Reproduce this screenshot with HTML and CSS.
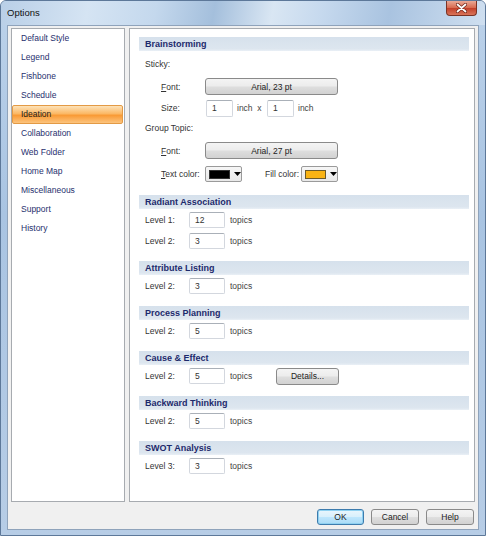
FILE: index.html
```html
<!DOCTYPE html>
<html>
<head>
<meta charset="utf-8">
<title>Options</title>
<link rel="stylesheet" href="styles.css">
</head>
<body>
<div class="window">
  <div class="titlebar">
    <span class="title">Options</span>
    <div class="close">
      <svg width="11" height="10" viewBox="0 0 11 10">
        <path d="M1.5 1.5 L9.5 8.5 M9.5 1.5 L1.5 8.5" stroke="#6b2418" stroke-width="3.2" stroke-linecap="round"/>
        <path d="M1.5 1.5 L9.5 8.5 M9.5 1.5 L1.5 8.5" stroke="#ffffff" stroke-width="1.8" stroke-linecap="round"/>
      </svg>
    </div>
  </div>
  <div class="client">
    <div class="panes">
      <ul class="nav">
        <li class="item">Default Style</li>
        <li class="item">Legend</li>
        <li class="item">Fishbone</li>
        <li class="item">Schedule</li>
        <li class="item active">Ideation</li>
        <li class="item">Collaboration</li>
        <li class="item">Web Folder</li>
        <li class="item">Home Map</li>
        <li class="item">Miscellaneous</li>
        <li class="item">Support</li>
        <li class="item">History</li>
      </ul>
      <div class="content">
        <section class="sec sec-brain">
          <h2 class="band">Brainstorming</h2>
          <div class="row h-sticky">Sticky:</div>
          <div class="row sub h-font"><span class="lbl"><u>F</u>ont:</span><span class="btn fontbtn">Arial, 23 pt</span></div>
          <div class="row sub h-size"><span class="lbl">Size:</span><span class="field small">1</span><span class="unit">inch&nbsp; x</span><span class="field small">1</span><span class="unit">inch</span></div>
          <div class="row h-group">Group Topic:</div>
          <div class="row sub h-font2"><span class="lbl"><u>F</u>ont:</span><span class="btn fontbtn">Arial, 27 pt</span></div>
          <div class="row sub h-color">
            <span class="lbl"><u>T</u>ext color:</span>
            <span class="picker"><span class="swatch black"></span><svg class="arrow" width="7" height="4" viewBox="0 0 7 4"><path d="M0 0H7L3.5 4Z" fill="#000"/></svg></span>
            <span class="lbl fill">Fill color:</span>
            <span class="picker"><span class="swatch orange"></span><svg class="arrow" width="7" height="4" viewBox="0 0 7 4"><path d="M0 0H7L3.5 4Z" fill="#000"/></svg></span>
          </div>
        </section>
        <section class="sec">
          <h2 class="band">Radiant Association</h2>
          <div class="row lvl"><span class="lbl2">Level 1:</span><span class="field">12</span><span class="unit">topics</span></div>
          <div class="row lvl"><span class="lbl2">Level 2:</span><span class="field">3</span><span class="unit">topics</span></div>
        </section>
        <section class="sec">
          <h2 class="band">Attribute Listing</h2>
          <div class="row lvl"><span class="lbl2">Level 2:</span><span class="field">3</span><span class="unit">topics</span></div>
        </section>
        <section class="sec">
          <h2 class="band">Process Planning</h2>
          <div class="row lvl"><span class="lbl2">Level 2:</span><span class="field">5</span><span class="unit">topics</span></div>
        </section>
        <section class="sec">
          <h2 class="band">Cause &amp; Effect</h2>
          <div class="row lvl"><span class="lbl2">Level 2:</span><span class="field">5</span><span class="unit wide">topics</span><span class="btn details">Details...</span></div>
        </section>
        <section class="sec">
          <h2 class="band">Backward Thinking</h2>
          <div class="row lvl"><span class="lbl2">Level 2:</span><span class="field">5</span><span class="unit">topics</span></div>
        </section>
        <section class="sec">
          <h2 class="band">SWOT Analysis</h2>
          <div class="row lvl"><span class="lbl2">Level 3:</span><span class="field">3</span><span class="unit">topics</span></div>
        </section>
      </div>
    </div>
    <div class="footer">
      <span class="btn dlg ok">OK</span>
      <span class="btn dlg">Cancel</span>
      <span class="btn dlg">Help</span>
    </div>
  </div>
</div>
</body>
</html>
```
FILE: styles.css
```css
html, body {
  margin: 0;
  padding: 0;
}
body {
  width: 486px;
  height: 536px;
  overflow: hidden;
  font-family: "Liberation Sans", Arial, sans-serif;
  font-size: 8.5px;
  color: #333;
}
.window {
  width: 486px;
  height: 536px;
  box-sizing: border-box;
  display: flex;
  flex-direction: column;
  border: 1px solid #5d7899;
  border-radius: 6px 6px 0 0;
  background: linear-gradient(180deg, #bcd2ea 0%, #a9c4e2 40%, #b7cde6 100%);
}
.titlebar {
  height: 24px;
  flex: none;
  display: flex;
  justify-content: space-between;
  align-items: flex-start;
  border-radius: 5px 5px 0 0;
  background: linear-gradient(100deg, #b9cfe7 0%, #d5e4f3 18%, #c4d8ed 32%, #a4bfdc 44%, #d9e6f3 56%, #c6d9ee 66%, #a9c3e0 80%, #cfdff0 100%);
}
.title {
  padding: 6px 0 0 6px;
  font-size: 9.5px;
  color: #111;
}
.close {
  width: 31px;
  height: 15px;
  margin-right: 8px;
  box-sizing: border-box;
  border: 1px solid #7b3325;
  border-top: none;
  border-radius: 0 0 4px 4px;
  background: linear-gradient(180deg, #e9a996 0%, #d86a50 48%, #c2402a 52%, #d9755a 100%);
  display: flex;
  align-items: center;
  justify-content: center;
}
.client {
  flex: 1;
  margin: 0 6px 5px 6px;
  border: 1px solid #8fa3bb;
  background: #f0f0f0;
  display: flex;
  flex-direction: column;
  padding: 2px 3px 4px 3px;
}
.panes {
  flex: 1;
  display: flex;
  gap: 4px;
  min-height: 0;
}
.nav {
  width: 114px;
  box-sizing: border-box;
  margin: 0;
  padding: 0;
  list-style: none;
  background: #fff;
  border: 1px solid #a7abb0;
}
.item {
  height: 19px;
  line-height: 19px;
  padding-left: 9px;
  margin-right: 1px;
  color: #27306e;
  box-sizing: border-box;
}
.item.active {
  color: #1c1c1c;
  border: 1px solid #e39a45;
  border-radius: 2px;
  line-height: 17px;
  padding-left: 8px;
  background: linear-gradient(180deg, #fde2b8 0%, #fbb865 45%, #f99a35 55%, #fcc47e 100%);
}
.content {
  flex: 1;
  background: #fff;
  border: 1px solid #a7abb0;
  padding: 8px 5px 0 9px;
}
.sec {
  margin-bottom: 10px;
}
.sec-brain {
  margin-bottom: 11px;
}
.band {
  margin: 0;
  height: 14px;
  line-height: 14px;
  padding-left: 6px;
  font-size: 9px;
  font-weight: bold;
  color: #1d2a6c;
  background: linear-gradient(180deg, #d6e1ec 0%, #dde6ef 85%, #eaf0f6 100%);
}
.row {
  display: flex;
  align-items: center;
  padding-left: 6px;
}
.row.sub {
  padding-left: 22px;
}
.h-sticky { height: 24px; margin-top: 1px; }
.h-font { height: 21px; }
.h-size { height: 22px; }
.h-group { height: 18px; }
.h-font2 { height: 27px; }
.h-color { height: 20px; }
.lvl {
  height: 20px;
  margin-top: 1px;
}
.lbl {
  width: 44px;
  flex: none;
}
.lbl.fill {
  width: 36px;
  margin-left: 23px;
}
.lbl2 {
  width: 44px;
  flex: none;
}
.field {
  width: 36px;
  height: 16px;
  box-sizing: border-box;
  border: 1px solid #d3d7de;
  border-top-color: #aab0b8;
  border-radius: 2px;
  padding-left: 5px;
  line-height: 14px;
  color: #333;
  background: #fff;
}
.field.small {
  width: 27px;
  height: 17px;
  line-height: 15px;
  margin-left: 1px;
}
.unit {
  margin-left: 5px;
  color: #444;
}
.h-size .unit {
  margin-left: 4px;
  width: 29px;
}
.unit.wide {
  width: 46px;
}
.btn {
  display: flex;
  align-items: center;
  justify-content: center;
  box-sizing: border-box;
  border: 1px solid #8a8a8a;
  border-radius: 3px;
  color: #222;
  background: linear-gradient(180deg, #f4f4f4 0%, #ececec 48%, #dedede 52%, #d2d2d2 100%);
}
.fontbtn {
  width: 133px;
  height: 17px;
}
.details {
  width: 63px;
  height: 17px;
}
.picker {
  width: 37px;
  height: 16px;
  box-sizing: border-box;
  border: 1px solid #9a9a9a;
  border-radius: 2px;
  background: linear-gradient(180deg, #f6f6f6 0%, #e8e8e8 100%);
  display: flex;
  align-items: center;
  padding-left: 3px;
  gap: 4px;
}
.swatch {
  width: 21px;
  height: 9px;
  box-sizing: border-box;
  border: 1px solid #333;
}
.swatch.black {
  background: #000;
}
.swatch.orange {
  background: #f9b313;
  border-color: #6b5a2a;
}
.footer {
  flex: none;
  margin-top: 7px;
  height: 16px;
  display: flex;
  justify-content: flex-end;
  gap: 7px;
  padding-right: 1px;
}
.dlg {
  width: 48px;
  height: 16px;
}
.ok {
  width: 47px;
  border-color: #3d7bad;
  box-shadow: inset 0 0 0 1px #8fd1f1;
  background: linear-gradient(180deg, #eaf6fd 0%, #d9f0fc 48%, #bee6fd 52%, #a9dbf6 100%);
}
```
